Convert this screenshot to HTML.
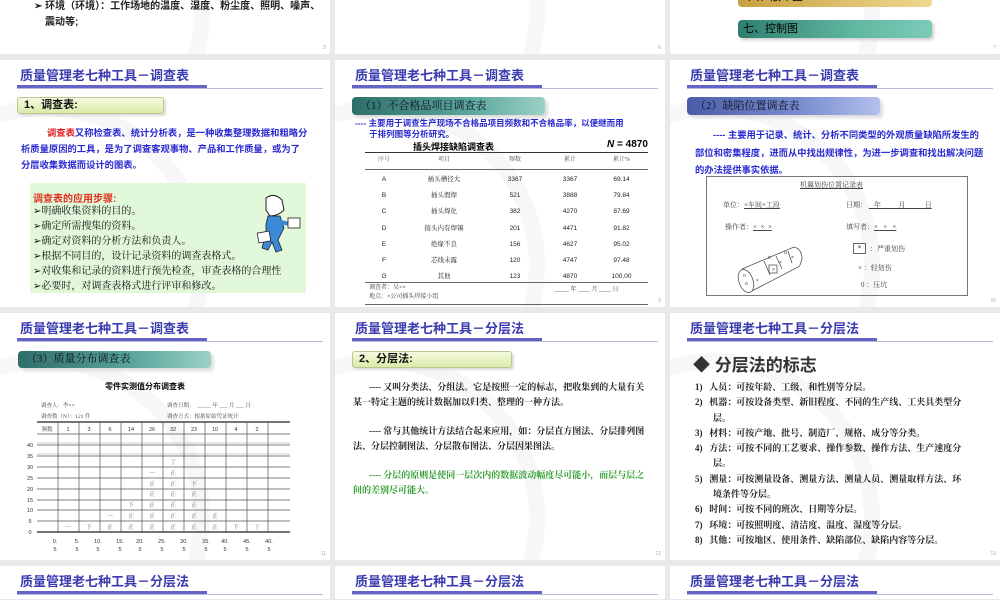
<!DOCTYPE html>
<html><head><meta charset="utf-8">
<style>
*{margin:0;padding:0;box-sizing:border-box}
html{width:1000px;height:600px;overflow:hidden}
body{width:1000px;height:600px;background:#e9e9ec;position:relative;overflow:hidden;font-family:"Liberation Sans","Noto Sans CJK SC",sans-serif}
.s{position:absolute;width:330px;height:247px;background:#fff;overflow:hidden}
.s .arc{position:absolute;left:-120px;top:40px;width:330px;height:330px;border-radius:50%;border:16px solid #f7f7f9}
.a{position:absolute;white-space:nowrap}
.t{position:absolute;left:20px;top:5px;font-size:13px;font-weight:bold;color:#3b3bb0}
.b1{position:absolute;left:17px;top:25px;width:190px;height:4px;background:#6464c8}
.b2{position:absolute;left:17px;top:28px;width:306px;height:1px;background:#b8b8dc}
.pn{position:absolute;right:4px;bottom:3px;font-size:5px;color:#aaa}
.gb{position:absolute;left:17px;top:37px;width:147px;height:17px;border:1px solid #b8c890;border-radius:3px;background:linear-gradient(#f6fbe0,#d8eca8);box-shadow:2px 2px 2px #ddd;font-size:11px;font-weight:bold;color:#111;padding-left:6px;line-height:15px}
.tb{position:absolute;left:17px;top:37px;width:193px;height:18px;border-radius:4px;font-size:11px;color:#112;padding-left:8px;line-height:18px;box-shadow:3px 3px 3px #ddd;font-family:"Liberation Serif","Noto Serif CJK SC",serif}
.teal{background:linear-gradient(90deg,#2e6e68,#5aa69c 60%,#9cd0c6)}
.blu{background:linear-gradient(90deg,#4a5ca8,#7a8ed0 60%,#b4c0ec)}
.bl{color:#2a2ad0;font-weight:bold}
.sf{font-family:"Liberation Serif","Noto Serif CJK SC",serif}
.ln{position:absolute;background:#333}
</style></head><body>

<!-- Row 0 partial -->
<div class="s" style="left:0;top:-193px">
<div class="arc"></div>
<div class="a" style="left:34px;top:190px;font-size:10px;font-weight:bold;color:#222">➢ 环境（环境）：工作场地的温度、湿度、粉尘度、照明、噪声、</div>
<div class="a" style="left:45px;top:206px;font-size:10px;font-weight:bold;color:#222">震动等;</div>
<div class="pn">5</div></div>
<div class="s" style="left:335px;top:-193px"><div class="arc"></div><div class="pn">6</div></div>
<div class="s" style="left:670px;top:-193px"><div class="arc"></div>
<div class="a" style="left:68px;top:180px;width:194px;height:20px;border-radius:4px;background:linear-gradient(90deg,#c8a040,#f0d890);font-size:11px;line-height:20px;padding-left:10px">六、散布图</div>
<div class="a" style="left:68px;top:213px;width:194px;height:18px;border-radius:4px;background:linear-gradient(90deg,#2e7e70,#60b8a0 60%,#7ccab8);font-size:11px;line-height:18px;padding-left:5px;box-shadow:2px 2px 3px #ccc">七、控制图</div>
<div class="pn">7</div></div>

<!-- Row 1 -->
<div class="s" style="left:0;top:60px"><div class="arc"></div>
<div class="t">质量管理老七种工具－调查表</div><div class="b1"></div><div class="b2"></div>
<div class="gb">1、调查表:</div>
<div class="a bl" style="left:21px;top:65px;font-size:9.3px;line-height:16px;white-space:normal;width:288px"><span style="padding-left:26px;color:#e02020">调查表</span>又称检查表、统计分析表，是一种收集整理数据和粗略分析质量原因的工具，是为了调查客观事物、产品和工作质量，或为了分层收集数据而设计的图表。</div>
<div class="a" style="left:30px;top:123px;width:276px;height:110px;background:#e2f8da"></div>
<div class="a" style="left:33px;top:130px;font-size:10px;font-weight:bold;color:#e03020">调查表的应用步骤:</div>
<div class="a sf" style="left:33px;top:144px;font-size:10px;line-height:15px;color:#111">➢明确收集资料的目的。<br>➢确定所需搜集的资料。<br>➢确定对资料的分析方法和负责人。<br>➢根据不同目的，设计记录资料的调查表格式。<br>➢对收集和记录的资料进行预先检查，审查表格的合理性<br>➢必要时，对调查表格式进行评审和修改。</div>
<svg class="a" style="left:256px;top:134px" width="50" height="64" viewBox="0 0 50 64">
<path d="M10 4 Q18 -2 26 6 L28 16 Q22 22 14 22 L10 16 Z" fill="#fff" stroke="#222" stroke-width="1"/>
<path d="M12 22 L24 22 L28 34 L22 46 L26 56 L20 58 L16 48 L12 56 L6 54 L10 40 L10 30 Z" fill="#3a8ad8" stroke="#222" stroke-width="0.8"/>
<path d="M24 28 L34 30" stroke="#3a8ad8" stroke-width="4"/>
<rect x="32" y="24" width="12" height="10" fill="#fff" stroke="#222" stroke-width="0.8"/>
<rect x="2" y="38" width="12" height="10" fill="#fff" stroke="#222" stroke-width="0.8" transform="rotate(-10 8 43)"/>
</svg>
<div class="pn"></div></div>

<div class="s" style="left:335px;top:60px"><div class="arc"></div>
<div class="t">质量管理老七种工具－调查表</div><div class="b1"></div><div class="b2"></div>
<div class="tb teal">（1）不合格品项目调查表</div>
<div class="a bl" style="left:20px;top:58px;font-size:8.5px;line-height:11px">---- 主要用于调查生产现场不合格品项目频数和不合格品率，以便继而用<br>&nbsp;&nbsp;&nbsp;&nbsp;&nbsp;&nbsp;于排列图等分析研究。</div>
<div class="a" style="left:78px;top:80px;font-size:9px;font-weight:bold">插头焊接缺陷调查表</div>
<div class="a" style="left:272px;top:79px;font-size:10px;font-weight:bold"><i>N</i> = 4870</div>
<div class="ln" style="left:30px;top:92px;width:283px;height:1px"></div>
<div class="ln" style="left:30px;top:109px;width:283px;height:1px;background:#666"></div>
<div class="ln" style="left:30px;top:222px;width:283px;height:1px;background:#666"></div>
<div class="ln" style="left:30px;top:244px;width:283px;height:1px;background:#666"></div>
<div class="a sf" style="left:30px;top:96px;width:283px;font-size:6px;color:#555;display:flex;line-height:8px">
<span style="width:38px;text-align:center">序号</span><span style="width:82px;text-align:center">项目</span><span style="width:60px;text-align:center">频数</span><span style="width:50px;text-align:center">累计</span><span style="width:53px;text-align:center">累计%</span></div>
<div class="a" style="left:30px;top:112px;width:283px;font-size:6.5px;color:#222;line-height:16.2px">
<div style="display:flex"><span style="width:38px;text-align:center">A</span><span class="sf" style="width:82px;text-align:center">插头槽径大</span><span style="width:60px;text-align:center">3367</span><span style="width:50px;text-align:center">3367</span><span style="width:53px;text-align:center">69.14</span></div>
<div style="display:flex"><span style="width:38px;text-align:center">B</span><span class="sf" style="width:82px;text-align:center">插头假焊</span><span style="width:60px;text-align:center">521</span><span style="width:50px;text-align:center">3888</span><span style="width:53px;text-align:center">79.84</span></div>
<div style="display:flex"><span style="width:38px;text-align:center">C</span><span class="sf" style="width:82px;text-align:center">插头焊化</span><span style="width:60px;text-align:center">382</span><span style="width:50px;text-align:center">4270</span><span style="width:53px;text-align:center">87.69</span></div>
<div style="display:flex"><span style="width:38px;text-align:center">D</span><span class="sf" style="width:82px;text-align:center">接头内有焊锡</span><span style="width:60px;text-align:center">201</span><span style="width:50px;text-align:center">4471</span><span style="width:53px;text-align:center">91.82</span></div>
<div style="display:flex"><span style="width:38px;text-align:center">E</span><span class="sf" style="width:82px;text-align:center">绝缘不良</span><span style="width:60px;text-align:center">156</span><span style="width:50px;text-align:center">4627</span><span style="width:53px;text-align:center">95.02</span></div>
<div style="display:flex"><span style="width:38px;text-align:center">F</span><span class="sf" style="width:82px;text-align:center">芯线未露</span><span style="width:60px;text-align:center">120</span><span style="width:50px;text-align:center">4747</span><span style="width:53px;text-align:center">97.48</span></div>
<div style="display:flex"><span style="width:38px;text-align:center">G</span><span class="sf" style="width:82px;text-align:center">其他</span><span style="width:60px;text-align:center">123</span><span style="width:50px;text-align:center">4870</span><span style="width:53px;text-align:center">100.00</span></div>
</div>
<div class="a sf" style="left:34px;top:224px;font-size:6px;color:#444;line-height:9px">调查者：吴××<br>地点：×公司插头焊接小组</div>
<div class="a sf" style="left:219px;top:224px;font-size:6px;color:#444">_____ 年 ____ 月 ____ 日</div>
<div class="pn">9</div></div>

<div class="s" style="left:670px;top:60px"><div class="arc"></div>
<div class="t">质量管理老七种工具－调查表</div><div class="b1"></div><div class="b2"></div>
<div class="tb blu">（2）缺陷位置调查表</div>
<div class="a bl" style="left:25px;top:67px;width:292px;white-space:normal;font-size:9.3px;line-height:17.5px"><span style="padding-left:18px">---- 主要用于记录、统计、分析不同类型的外观质量缺陷所发生的部位和密集程度，进而从中找出规律性，为进一步调查和找出解决问题的办法提供事实依据。</span></div>
<div class="a" style="left:36px;top:116px;width:262px;height:120px;border:1px solid #777"></div>
<div class="a sf" style="left:130px;top:120px;font-size:7px;color:#444;text-decoration:underline">机翼划伤位置记录表</div>
<div class="a sf" style="left:53px;top:140px;font-size:7px;color:#444">单位：<u>×车间×工段</u></div>
<div class="a sf" style="left:176px;top:140px;font-size:7px;color:#444">日期： <u>&nbsp;&nbsp;&nbsp;年&nbsp;&nbsp;&nbsp;&nbsp;&nbsp;&nbsp;&nbsp;&nbsp;&nbsp;&nbsp;月&nbsp;&nbsp;&nbsp;&nbsp;&nbsp;&nbsp;&nbsp;&nbsp;&nbsp;&nbsp;&nbsp;日</u></div>
<div class="a sf" style="left:55px;top:162px;font-size:7px;color:#444">操作者：<u>×&nbsp;&nbsp;×&nbsp;&nbsp;×</u></div>
<div class="a sf" style="left:176px;top:162px;font-size:7px;color:#444">填写者：<u>×&nbsp;&nbsp;&nbsp;×&nbsp;&nbsp;&nbsp;×</u></div>
<div class="a" style="left:183px;top:183px;width:13px;height:11px;border:1px solid #666;font-size:6px;text-align:center;line-height:9px">×</div>
<div class="a sf" style="left:200px;top:184px;font-size:7px;color:#444">：严重划伤</div>
<div class="a sf" style="left:188px;top:203px;font-size:7px;color:#444">× ：轻划伤</div>
<div class="a sf" style="left:191px;top:220px;font-size:7px;color:#444">0 ：压坑</div>
<svg class="a" style="left:66px;top:185px" width="70" height="50" viewBox="0 0 70 50">
<g fill="none" stroke="#555" stroke-width="0.8">
<ellipse cx="10" cy="36" rx="7" ry="12" transform="rotate(-20 10 36)"/>
<path d="M6 24 L58 2 Q66 4 66 14 Q64 22 62 22 L16 46"/>
<path d="M28 16 L34 30 M40 11 L46 24 M52 6 L56 18"/>
<rect x="33" y="20" width="8" height="8"/>
</g>
<g font-size="5" fill="#444"><text x="36" y="26">×</text><text x="43" y="19">×</text><text x="55" y="14">×</text><text x="20" y="37">×</text><text x="7" y="32">o</text><text x="9" y="40">o</text><text x="32" y="14">o</text><text x="48" y="9">o</text></g>
</svg>
<div class="pn">10</div></div>

<!-- Row 2 -->
<div class="s" style="left:0;top:313px"><div class="arc"></div>
<div class="t">质量管理老七种工具－调查表</div><div class="b1"></div><div class="b2"></div>
<div class="tb teal" style="left:18px;top:38px;height:17px;line-height:17px">（3）质量分布调查表</div>
<div class="a" style="left:105px;top:68px;font-size:8px;font-weight:bold">零件实测值分布调查表</div>
<div class="a sf" style="left:41px;top:88px;font-size:5.5px;color:#444;line-height:11px">调查人：李××<br>调查数（N）：121 件</div>
<div class="a sf" style="left:167px;top:88px;font-size:5.5px;color:#444;line-height:11px">调查日期：&nbsp;&nbsp;_____ 年 ___ 月 ___ 日<br>调查方式：根据原始凭证统计</div>
<svg class="a" style="left:20px;top:105px" width="280" height="142" viewBox="0 0 280 142">
<g stroke="#555" stroke-width="0.7" fill="none">
<line x1="17" y1="4" x2="270" y2="4" stroke="#222" stroke-width="1.2"/>
<line x1="17" y1="16" x2="270" y2="16"/>
<line x1="17" y1="27" x2="270" y2="27"/><line x1="17" y1="25" x2="270" y2="25" stroke="#bbb"/>
<line x1="17" y1="38" x2="270" y2="38"/><line x1="17" y1="36" x2="270" y2="36" stroke="#bbb"/>
<line x1="17" y1="49" x2="270" y2="49"/><line x1="17" y1="60" x2="270" y2="60"/>
<line x1="17" y1="71" x2="270" y2="71"/><line x1="17" y1="82" x2="270" y2="82"/>
<line x1="17" y1="92" x2="270" y2="92"/><line x1="17" y1="103" x2="270" y2="103"/>
<line x1="17" y1="114" x2="270" y2="114" stroke="#222" stroke-width="1.2"/>
<path d="M38 4V114M59 4V114M80 4V114M101 4V114M122 4V114M143 4V114M164 4V114M185 4V114M206 4V114M227 4V114M248 4V114"/>
</g>
<g font-size="5.5" fill="#333" text-anchor="middle" font-family="Liberation Sans">
<text x="27" y="13" font-family="Noto Serif CJK SC">频数</text><text x="48" y="13">1</text><text x="69" y="13">3</text><text x="90" y="13">6</text><text x="111" y="13">14</text><text x="132" y="13">26</text><text x="153" y="13">32</text><text x="174" y="13">23</text><text x="195" y="13">10</text><text x="216" y="13">4</text><text x="237" y="13">2</text>
<text x="10" y="29">40</text><text x="10" y="40">35</text><text x="10" y="51">30</text><text x="10" y="62">25</text><text x="10" y="73">20</text><text x="10" y="84">15</text><text x="10" y="94">10</text><text x="10" y="105">5</text><text x="10" y="116">0</text>
<text x="35" y="125">0.</text><text x="35" y="133">5</text><text x="57" y="125">5.</text><text x="57" y="133">5</text><text x="78" y="125">10.</text><text x="78" y="133">5</text><text x="100" y="125">15.</text><text x="100" y="133">5</text><text x="120" y="125">20.</text><text x="120" y="133">5</text><text x="142" y="125">25.</text><text x="142" y="133">5</text><text x="164" y="125">30.</text><text x="164" y="133">5</text><text x="186" y="125">35.</text><text x="186" y="133">5</text><text x="205" y="125">40.</text><text x="205" y="133">5</text><text x="227" y="125">45.</text><text x="227" y="133">5</text><text x="249" y="125">40.</text><text x="249" y="133">5</text>
</g>
<g font-size="6" fill="#666" text-anchor="middle" font-family="Noto Serif CJK SC">
<text x="48" y="111">一</text><text x="69" y="111">下</text>
<text x="90" y="111">正</text><text x="90" y="100">一</text>
<text x="111" y="111">正</text><text x="111" y="100">正</text><text x="111" y="89">下</text>
<text x="132" y="111">正</text><text x="132" y="100">正</text><text x="132" y="89">正</text><text x="132" y="78">正</text><text x="132" y="68">正</text><text x="132" y="57">一</text>
<text x="153" y="111">正</text><text x="153" y="100">正</text><text x="153" y="89">正</text><text x="153" y="78">正</text><text x="153" y="68">正</text><text x="153" y="57">正</text><text x="153" y="46">丁</text>
<text x="174" y="111">正</text><text x="174" y="100">正</text><text x="174" y="89">正</text><text x="174" y="78">正</text><text x="174" y="68">下</text>
<text x="195" y="111">正</text><text x="195" y="100">正</text>
<text x="216" y="111">下</text><text x="237" y="111">丁</text>
</g>
</svg>
<div class="pn">11</div></div>

<div class="s" style="left:335px;top:313px"><div class="arc"></div>
<div class="t">质量管理老七种工具－分层法</div><div class="b1"></div><div class="b2"></div>
<div class="gb" style="top:38px;width:160px">2、分层法:</div>
<div class="a sf" style="left:18px;top:67px;width:300px;white-space:normal;font-size:9px;font-weight:bold;line-height:14.5px;color:#222">
<div style="text-indent:16px">---- 又叫分类法、分组法。它是按照一定的标志，把收集到的大量有关某一特定主题的统计数据加以归类、整理的一种方法。</div>
<div style="text-indent:16px;margin-top:15px">---- 常与其他统计方法结合起来应用，如：分层直方图法、分层排列图法、分层控制图法、分层散布图法、分层因果图法。</div>
<div style="text-indent:16px;margin-top:15px;color:#2a9a2a">---- 分层的原则是使同一层次内的数据波动幅度尽可能小，而层与层之间的差别尽可能大。</div>
</div>
<div class="pn">12</div></div>

<div class="s" style="left:670px;top:313px"><div class="arc"></div>
<div class="t">质量管理老七种工具－分层法</div><div class="b1"></div><div class="b2"></div>
<div class="a" style="left:23px;top:38px;font-size:17px;font-weight:bold;color:#333">◆ 分层法的标志</div>
<div class="a sf" style="left:25px;top:67px;font-size:9px;font-weight:bold;color:#222;line-height:15.3px">
1)&nbsp;&nbsp;&nbsp;人员：可按年龄、工级、和性别等分层。<br>
2)&nbsp;&nbsp;&nbsp;机器：可按设备类型、新旧程度、不同的生产线、工夹具类型分<br>
&nbsp;&nbsp;&nbsp;&nbsp;&nbsp;&nbsp;&nbsp;&nbsp;层。<br>
3)&nbsp;&nbsp;&nbsp;材料：可按产地、批号、制造厂、规格、成分等分类。<br>
4)&nbsp;&nbsp;&nbsp;方法：可按不同的工艺要求、操作参数、操作方法、生产速度分<br>
&nbsp;&nbsp;&nbsp;&nbsp;&nbsp;&nbsp;&nbsp;&nbsp;层。<br>
5)&nbsp;&nbsp;&nbsp;测量：可按测量设备、测量方法、测量人员、测量取样方法、环<br>
&nbsp;&nbsp;&nbsp;&nbsp;&nbsp;&nbsp;&nbsp;&nbsp;境条件等分层。<br>
6)&nbsp;&nbsp;&nbsp;时间：可按不同的班次、日期等分层。<br>
7)&nbsp;&nbsp;&nbsp;环境：可按照明度、清洁度、温度、湿度等分层。<br>
8)&nbsp;&nbsp;&nbsp;其他：可按地区、使用条件、缺陷部位、缺陷内容等分层。
</div>
<div class="pn">13</div></div>

<!-- Row 3 -->
<div class="s" style="left:0;top:566px;height:33px"><div class="t">质量管理老七种工具－分层法</div><div class="b1"></div><div class="b2"></div></div>
<div class="s" style="left:335px;top:566px;height:33px"><div class="t">质量管理老七种工具－分层法</div><div class="b1"></div><div class="b2"></div></div>
<div class="s" style="left:670px;top:566px;height:33px"><div class="t">质量管理老七种工具－分层法</div><div class="b1"></div><div class="b2"></div></div>
</body></html>
